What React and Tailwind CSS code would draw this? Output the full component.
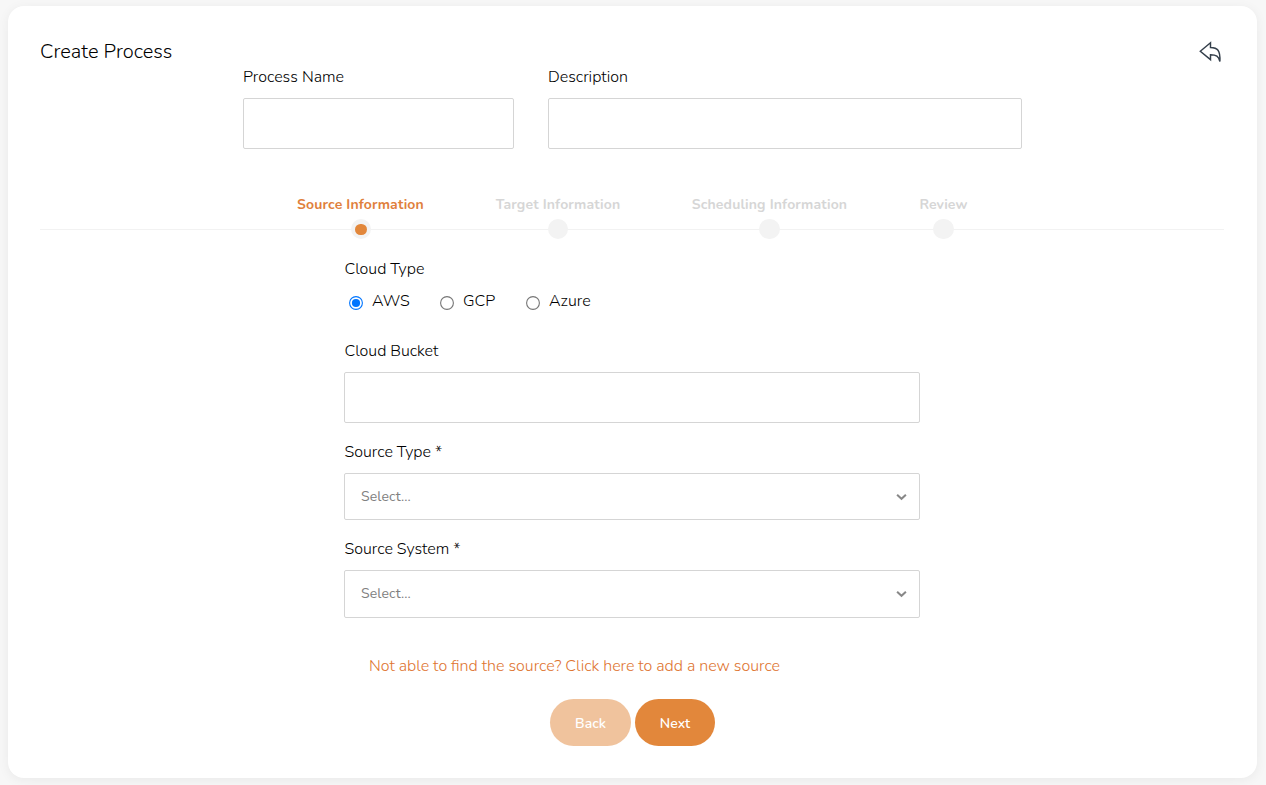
import React from "react";

const steps = [
  { label: "Source Information", width: "w-[127px]", dot: "w-5", active: true },
  { label: "Target Information", width: "w-[124px]", dot: "w-5" },
  { label: "Scheduling Information", width: "w-[155px]", dot: "w-[21px]" },
  { label: "Review", width: "w-[49px]", dot: "w-[21px]" },
];

const clouds = [
  { label: "AWS", width: "w-[91px]", checked: true },
  { label: "GCP", width: "w-[86px]" },
  { label: "Azure", width: "w-[90px]" },
];

function Label({ children, className = "" }) {
  return (
    <label className={`block h-6 whitespace-nowrap text-[16px] leading-6 text-black ${className}`}>
      <span>{children}</span>
    </label>
  );
}

function TextInput({ className = "" }) {
  return (
    <input
      type="text"
      className={`block h-[51px] rounded-[2px] border border-[#d5d5d5] bg-white px-4 outline-none ${className}`}
    />
  );
}

function Select({ className = "" }) {
  return (
    <div
      className={`flex w-[576px] items-center justify-between rounded-[2px] border border-[#d5d5d5] bg-white pl-4 pr-2 ${className}`}
    >
      <span className="text-[14px] font-normal leading-5 tracking-[0.12px] text-[#808080]">Select...</span>
      <svg width="20" height="20" viewBox="0 0 20 20" fill="none" stroke="#888" strokeWidth="2">
        <path d="M6.1 7.7 L10.5 11.8 L14.9 7.7" />
      </svg>
    </div>
  );
}

function Stepper() {
  return (
    <div className="relative mt-[46px] flex h-[45px] w-[1184px] justify-center gap-[72px] pl-px">
      <div className="absolute inset-x-0 top-[34px] h-px bg-[#f2f2f2]" />
      {steps.map((s) => (
        <div key={s.label} className={`relative flex flex-col items-center ${s.width}`}>
          <span
            className={`h-5 whitespace-nowrap text-[14px] font-bold leading-5 tracking-[0.15px] ${
              s.active ? "text-[#e07f3c]" : "text-[#d6d6d6]"
            }`}
          >
            {s.label}
          </span>
          <span className={`mt-1 flex h-5 shrink-0 items-center justify-center rounded-full bg-[#f3f3f3] ${s.dot}`}>
            {s.active && <span className="mt-px h-[11px] w-3 rounded-full bg-[#e2873b]" />}
          </span>
        </div>
      ))}
    </div>
  );
}

export default function App() {
  return (
    <div className="h-[785px] w-[1266px] overflow-hidden bg-[#f7f7f7] pl-2 pt-1.5 font-[Nunito,Lato,sans-serif] font-light text-black">
      <main className="h-[772px] w-[1249px] rounded-2xl bg-white px-8 pt-[33px] shadow-[0_2px_12px_rgba(0,0,0,0.06)]">
        <header className="flex h-[26px] w-[1184px] items-start justify-between">
          <h1 className="mt-px whitespace-nowrap text-[20px] leading-6 tracking-[0.04px]">Create Process</h1>
          <svg
            className="mr-px mt-0.5"
            width="24"
            height="22"
            viewBox="0 0 24 22"
            fill="none"
            stroke="#343f4b"
            strokeWidth="1.45"
            strokeLinejoin="miter"
          >
            <path d="M1.3 10.2 L11.5 1.8 V6.5 C18.5 6.7 21.4 9 20.9 20.5 C19.5 15.4 17.5 13.7 11.5 13.7 V18.6 Z" />
          </svg>
        </header>

        <div className="flex gap-[34px] pl-[203px]">
          <div>
            <Label>Process Name</Label>
            <TextInput className="mt-[9px] w-[271px]" />
          </div>
          <div>
            <Label>Description</Label>
            <TextInput className="mt-[9px] w-[474px]" />
          </div>
        </div>

        <Stepper />

        <section className="mt-[17px] pl-[304px]">
          <Label className="pl-[0.5px] tracking-[-0.04px]">Cloud Type</Label>
          <div className="mt-2 flex h-6 pl-[5px]">
            {clouds.map((c) => (
              <label key={c.label} className={`flex whitespace-nowrap text-[16px] leading-6 ${c.width}`}>
                <svg className="mt-[7px] shrink-0" width="14" height="14" viewBox="0 0 14 14">
                  <circle cx="7" cy="7" r="6.4" fill="white" stroke={c.checked ? "#0075ff" : "#767676"} strokeWidth="1.1" />
                  {c.checked && <circle cx="7" cy="7" r="4.1" fill="#0075ff" />}
                </svg>
                <span className="ml-[9px]">{c.label}</span>
              </label>
            ))}
          </div>

          <Label className="mt-[26px] pl-[0.5px] tracking-[-0.04px]">Cloud Bucket</Label>
          <TextInput className="mt-[9px] w-[576px]" />

          <Label className="mt-[17px] pl-[0.5px]">Source Type *</Label>
          <Select className="mt-[9px] h-[47px]" />

          <Label className="mt-[17px] pl-[0.5px]">Source System *</Label>
          <Select className="mt-[9px] h-12" />

          <a className="mt-9 block h-6 whitespace-nowrap pl-[25px] text-[16px] leading-6 text-[#de7430] [word-spacing:-0.12px]">
            Not able to find the source? Click here to add a new source
          </a>
        </section>

        <div className="mt-[21px] flex gap-1 pl-[510px]">
          <button className="h-[47px] w-[81px] rounded-[25px] bg-[#f0c39d] pt-0.5 text-[14px] font-semibold leading-5 text-white">
            Back
          </button>
          <button className="h-[47px] w-20 rounded-[25px] bg-[#e2873b] pt-0.5 text-[14px] font-semibold leading-5 text-white">
            Next
          </button>
        </div>
      </main>
    </div>
  );
}
